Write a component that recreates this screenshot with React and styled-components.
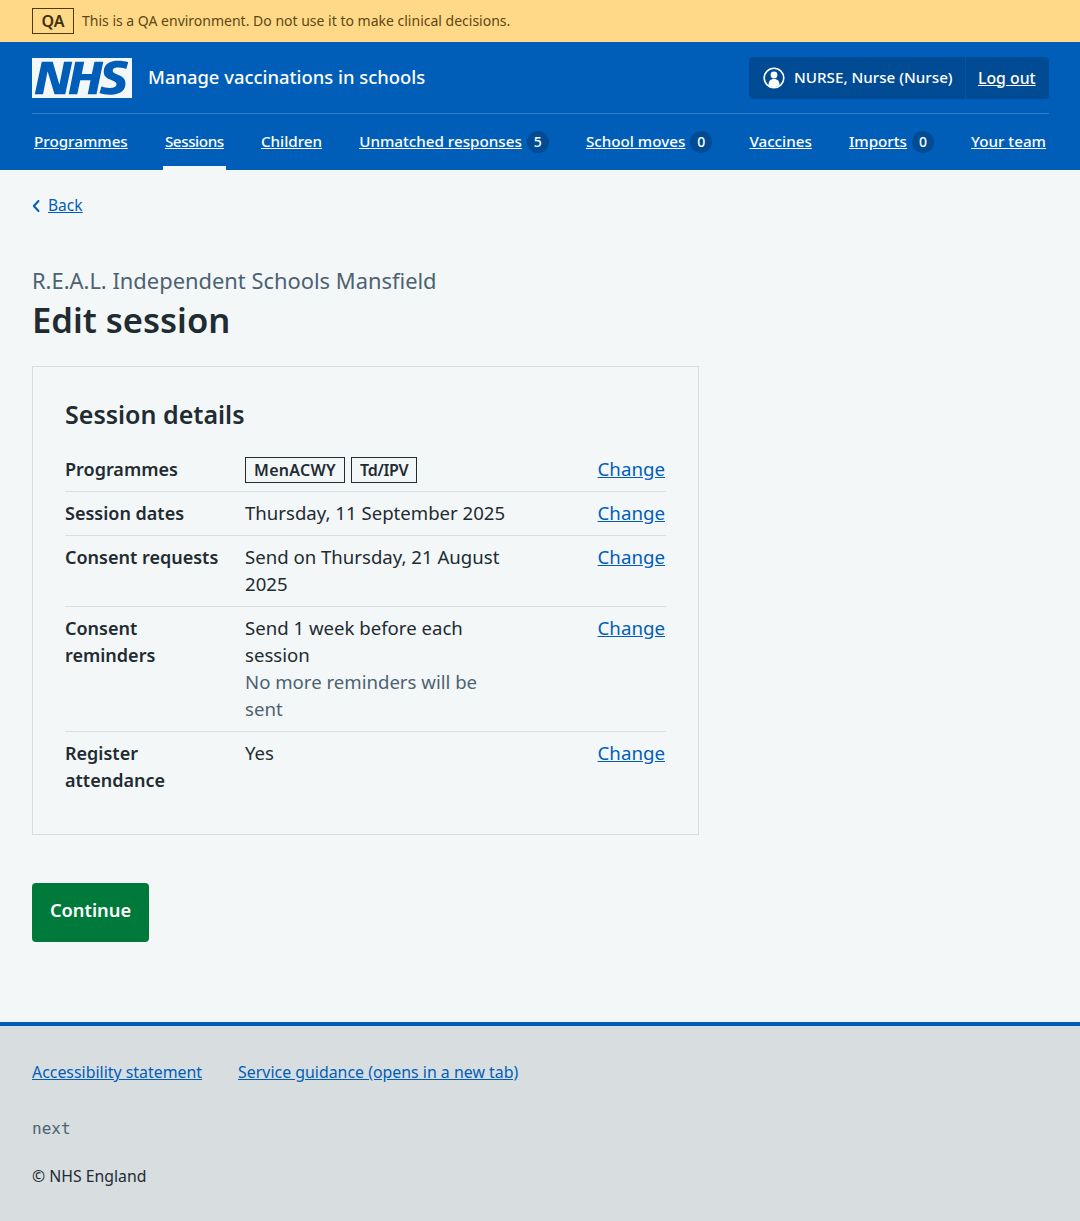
import React from "react";
import styled, { createGlobalStyle } from "styled-components";

const Global = createGlobalStyle`
  html, body { margin: 0; padding: 0; background: #f4f7f8; }
  body { font-family: "Noto Sans", "Open Sans", Arial, sans-serif; color: #212b32; font-size: 19px; line-height: 27px; }
  * { box-sizing: border-box; }
`;
const Banner = styled.div`
  height: 42px; background: #ffd987; display: flex; align-items: center; gap: 8px; padding: 0 32px; color: #5c4814; font-size: 14px;
`;
const BannerText = styled.span`
  padding-bottom: 2px;
`;
const QaTag = styled.span`
  width: 42px; height: 26px; border: 1px solid #4d3b0c; display: flex; align-items: center; justify-content: center; font-weight: 600; font-size: 16px; color: #40310a;
`;
const Header = styled.header`
  background: #005eb8; height: 128px; padding: 15px 31px 0 32px; color: #fff;
`;
const TopRow = styled.div`
  height: 57px; display: flex; align-items: flex-start; justify-content: space-between; border-bottom: 1px solid #2f7cc7;
`;
const Brand = styled.div`
  display: flex; align-items: center; gap: 16px; font-size: 18.4px; font-weight: 500; margin-top: 1px;
`;
const BrandName = styled.span`
  padding-bottom: 4px;
`;
const Account = styled.div`
  width: 300px; height: 42px; background: #004b93; border-radius: 4px; display: flex; align-items: center; font-size: 15.2px; font-weight: 500;
`;
const AccountName = styled.div`
  width: 217px; height: 100%; padding: 0 0 0 14px; display: flex; align-items: center; gap: 9px; border-right: 1px solid #0056a8; white-space: nowrap;
  span { padding-bottom: 2px; }
`;
const LogOut = styled.a`
  margin-left: 12px; color: #fff; text-decoration: underline; font-size: 15.8px;
`;
const Nav = styled.nav`
  display: flex; justify-content: space-between; height: 56px; margin-right: 1px;
`;
const NavItem = styled.div`
  display: flex; align-items: center; gap: 5px; padding: 3px 2px 0; height: 100%; font-size: 15.2px; font-weight: 500; white-space: nowrap;
  border-bottom: 4px solid ${p => (p.$active ? "#f4f7f8" : "transparent")};
  a { color: #fff; text-decoration: underline; letter-spacing: ${p => (p.$active ? "-0.4px" : "0")}; }
`;
const Count = styled.span`
  width: 22px; height: 22px; border-radius: 50%; background: #004b93; display: flex; align-items: center; justify-content: center; font-size: 14px; font-weight: 500; color: #fff;
`;
const Main = styled.main`
  height: 852px; padding: 22px 32px 0;
`;
const BackLink = styled.a`
  display: flex; align-items: center; gap: 8px; color: #005eb8; font-size: 15.5px; line-height: 27px; height: 27px;
  span { text-decoration: underline; }
`;
const Caption = styled.div`
  margin-top: 46px; font-size: 21.9px; line-height: 32px; color: #4c6272;
`;
const Title = styled.h1`
  margin: 1px 0 0; font-size: 34.6px; line-height: 44px; font-weight: 600;
`;
const Card = styled.section`
  width: 667px; margin-top: 24px; border: 1px solid #d8dde0; padding: 31px 32px 32px;
`;
const CardTitle = styled.h2`
  margin: 0 0 22px; font-size: 25px; line-height: 32px; font-weight: 600;
`;
const Row = styled.div`
  display: grid; grid-template-columns: 180px 300px 1fr; padding: ${p => (p.$first ? "4px" : "8px")} 0 8px;
  border-bottom: ${p => (p.$last ? "none" : "1px solid #d8dde0")};
`;
const Key = styled.div`
  font-weight: 600; font-size: 18px; padding-right: 24px;
`;
const Value = styled.div`
  padding: 0 30px 1px 0; font-size: 18.6px; margin-top: -1px;
`;
const Muted = styled.div`
  color: #4c6272;
`;
const Action = styled.a`
  justify-self: end; color: #005eb8; text-decoration: underline; font-size: 18.7px; margin: -1px 1px 0 0;
`;
const Tags = styled.div`
  display: flex; gap: 6px; height: 25px; margin-top: 2px; align-items: flex-start;
`;
const Tag = styled.span`
  height: 26px; border: 1px solid #212b32; padding: 0 8px; font-size: 16px; font-weight: 600; display: flex; align-items: center; letter-spacing: ${p => p.$spacing};
`;
const Button = styled.button`
  display: block; margin-top: 48px; width: 117px; height: 59px; background: #007a3a; color: #fff; border: 0; border-radius: 4px; font: 600 18.3px "Noto Sans", sans-serif; padding: 0 0 6px;
`;
const Footer = styled.footer`
  height: 199px; background: #d8dde0; border-top: 4px solid #005eb8; padding: 33px 32px 0;
`;
const FootLinks = styled.div`
  display: flex; gap: 36px; font-size: 15.9px; line-height: 27px;
  a { color: #005eb8; text-decoration: underline; }
`;
const Version = styled.div`
  margin-top: 29px; font-family: "DejaVu Sans Mono", monospace; font-size: 16px; line-height: 27px; color: #4c6272;
`;
const Copy = styled.div`
  margin-top: 21px; font-size: 15.8px; line-height: 27px;
`;

const Logo = () => (
  <svg width="100" height="40" viewBox="0 0 40 16" aria-label="NHS">
    <path fill="#f4f7f8" d="M0 0h40v16H0z" />
    <path fill="#005eb8" d="M3.9 1.5h4.4l2.6 9h.1l1.8-9h3.3l-2.8 13H9l-2.7-9h-.1l-1.8 9H1.1M17.3 1.5h3.6l-1 4.9h4L25 1.5h3.5l-2.7 13h-3.5l1.1-5.6h-4.1l-1.2 5.6h-3.4M37.7 4.4c-.7-.3-1.6-.6-2.9-.6-1.4 0-2.5.2-2.5 1.3 0 1.8 5.1 1.2 5.1 5.1 0 3.6-3.3 4.5-6.4 4.5-1.3 0-2.9-.3-4-.7l.8-2.7c.7.4 2.1.7 3.2.7s2.8-.2 2.8-1.5c0-2.1-5.1-1.3-5.1-5 0-3.4 2.9-4.4 5.8-4.4 1.6 0 3.1.2 4 .6" />
  </svg>
);
const UserIcon = () => (
  <svg width="22" height="22" viewBox="0 0 22 22">
    <circle cx="11" cy="11" r="9.8" fill="none" stroke="#fff" strokeWidth="1.6" />
    <circle cx="11" cy="8" r="3.4" fill="#fff" />
    <path fill="#fff" d="M5.5 18c0-4 2-6 5.5-6s5.5 2 5.5 6c-1.5 1.4-3.4 2.2-5.5 2.2S7 19.400 5.500 18z" />
  </svg>
);
const Chevron = () => (
  <svg width="8" height="14" viewBox="0 0 8 14">
    <path d="M6.500 2 1.800 7l4.700 5" fill="none" stroke="#005eb8" strokeWidth="2" strokeLinecap="round" strokeLinejoin="round" />
  </svg>
);

const navItems = [
  ["Programmes"], ["Sessions", null, true], ["Children"], ["Unmatched responses", 5],
  ["School moves", 0], ["Vaccines"], ["Imports", 0], ["Your team"],
];

export default function App() {
  return (
    <>
      <Global />
      <Banner>
        <QaTag>QA</QaTag>
        <BannerText>This is a QA environment. Do not use it to make clinical decisions.</BannerText>
      </Banner>
      <Header>
        <TopRow>
          <Brand><Logo /><BrandName>Manage vaccinations in schools</BrandName></Brand>
          <Account>
            <AccountName><UserIcon /><span>NURSE, Nurse (Nurse)</span></AccountName>
            <LogOut href="#">Log out</LogOut>
          </Account>
        </TopRow>
        <Nav>
          {navItems.map(([label, count, active]) => (
            <NavItem key={label} $active={active}>
              <a href="#">{label}</a>
              {count !== undefined && count !== null && <Count>{count}</Count>}
            </NavItem>
          ))}
        </Nav>
      </Header>
      <Main>
        <BackLink href="#"><Chevron /><span>Back</span></BackLink>
        <Caption>R.E.A.L. Independent Schools Mansfield</Caption>
        <Title>Edit session</Title>
        <Card>
          <CardTitle>Session details</CardTitle>
          <Row $first>
            <Key>Programmes</Key>
            <Value><Tags><Tag $spacing="0.3px">MenACWY</Tag><Tag $spacing="-0.35px">Td/IPV</Tag></Tags></Value>
            <Action href="#">Change</Action>
          </Row>
          <Row>
            <Key>Session dates</Key>
            <Value>Thursday, 11 September 2025</Value>
            <Action href="#">Change</Action>
          </Row>
          <Row>
            <Key>Consent requests</Key>
            <Value>Send on Thursday, 21 August 2025</Value>
            <Action href="#">Change</Action>
          </Row>
          <Row>
            <Key>Consent reminders</Key>
            <Value>Send 1 week before each session<Muted>No more reminders will be sent</Muted></Value>
            <Action href="#">Change</Action>
          </Row>
          <Row $last>
            <Key>Register attendance</Key>
            <Value>Yes</Value>
            <Action href="#">Change</Action>
          </Row>
        </Card>
        <Button>Continue</Button>
      </Main>
      <Footer>
        <FootLinks>
          <a href="#">Accessibility statement</a>
          <a href="#">Service guidance (opens in a new tab)</a>
        </FootLinks>
        <Version>next</Version>
        <Copy>© NHS England</Copy>
      </Footer>
    </>
  );
}
